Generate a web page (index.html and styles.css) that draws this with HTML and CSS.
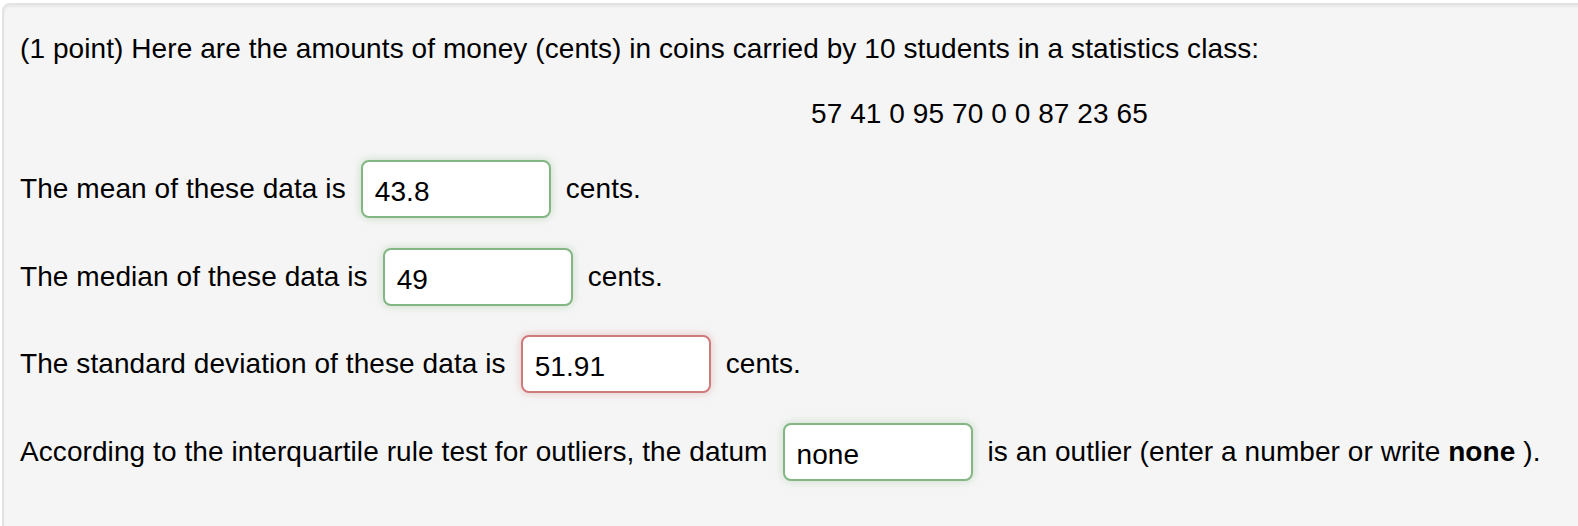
FILE: index.html
```html
<!DOCTYPE html>
<html>
<head>
<meta charset="utf-8">
<link rel="stylesheet" href="styles.css">
</head>
<body>
<div class="well">
  <p class="intro">(1 point) Here are the amounts of money (cents) in coins carried by 10 students in a statistics class:</p>
  <p class="data">57 41 0 95 70 0 0 87 23 65</p>
  <div class="row"><span>The mean of these data is</span><input class="ans ok" value="43.8"><span>cents.</span></div>
  <div class="row"><span>The median of these data is</span><input class="ans ok" value="49"><span>cents.</span></div>
  <div class="row"><span>The standard deviation of these data is</span><input class="ans bad" value="51.91"><span>cents.</span></div>
  <div class="row"><span>According to the interquartile rule test for outliers, the datum</span><input class="ans ok" value="none"><span>is an outlier (enter a number or write <b>none</b> ).</span></div>
</div>
</body>
</html>
```
FILE: styles.css
```css
html, body {
  margin: 0;
  padding: 0;
  background: #ffffff;
}
body {
  font-family: "Liberation Sans", Arial, sans-serif;
  font-size: 28px;
  color: #000;
  overflow: hidden;
}
.well {
  margin: 3px 0 0 2px;
  width: 1640px;
  min-height: 560px;
  background: #f5f5f5;
  border: 2px solid #e3e3e3;
  border-radius: 8px;
  box-shadow: inset 0 2px 2px rgba(0,0,0,0.05);
  padding: 24px 16px;
  box-sizing: border-box;
  letter-spacing: 0.08px;
}
.intro {
  margin: 0;
  line-height: 40px;
}
.data {
  margin: 25px 0 0 0;
  padding-left: 791px;
  line-height: 40px;
}
.row {
  display: flex;
  align-items: center;
  gap: 15px;
  height: 58px;
  white-space: nowrap;
}
.data + .row {
  margin-top: 26px;
}
.row + .row {
  margin-top: 29.5px;
}
.ans {
  width: 190px;
  height: 58px;
  box-sizing: border-box;
  border-radius: 8px;
  background: #fff;
  font-family: "Liberation Sans", Arial, sans-serif;
  font-size: 28px;
  letter-spacing: 0.08px;
  color: #000;
  padding: 6px 12px 0 12px;
  margin: 0;
  outline: none;
}
.ans.ok {
  border: 2px solid #83b683;
  box-shadow: 0 0 8px rgba(110, 170, 110, 0.35);
}
.ans.bad {
  border: 2px solid #cd7b7b;
  box-shadow: 0 0 8px rgba(200, 100, 100, 0.35);
}
```
